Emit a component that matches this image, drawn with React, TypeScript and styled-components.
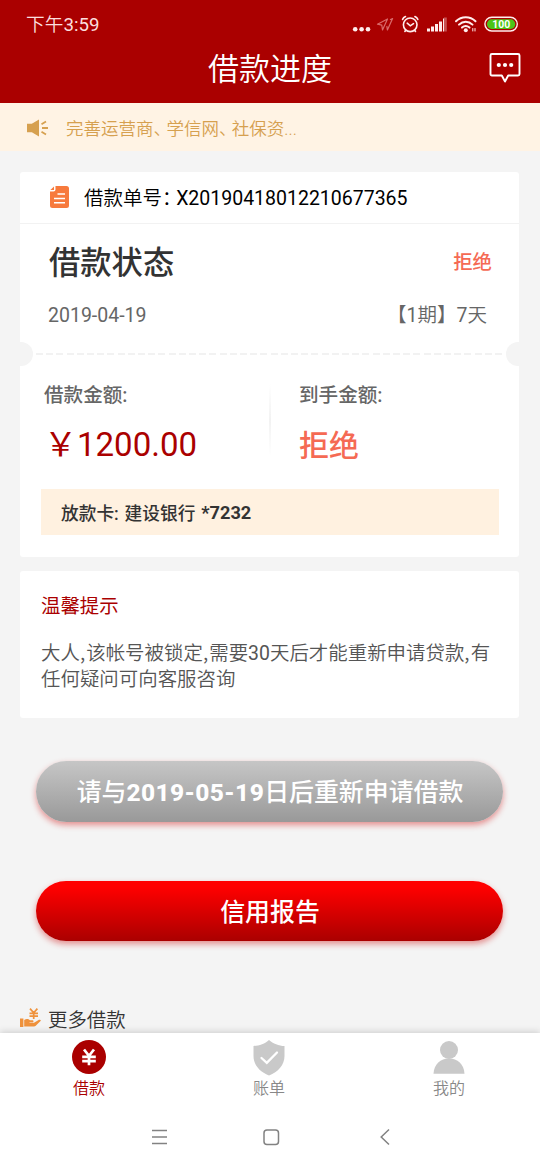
import React from "react";
import styled, { createGlobalStyle } from "styled-components";

const Global = createGlobalStyle`
  * { box-sizing: border-box; }
  body {
    margin: 0;
    background: #f4f4f4;
    font-family: Roboto, "Noto Sans CJK SC", sans-serif;
    color: #333;
    white-space: nowrap;
  }
`;

const Screen = styled.div`
  width: 540px;
  height: 1170px;
  display: flex;
  flex-direction: column;
  overflow: hidden;
  background: #f4f4f4;
`;

const Header = styled.header`
  height: 103px;
  flex: none;
  background: #aa0000;
  color: #fff;
`;

const StatusBar = styled.div`
  height: 48px;
  padding: 1px 21px 0 26px;
  display: flex;
  align-items: center;
  justify-content: space-between;
`;

const Clock = styled.span`
  font-size: 18.7px;
  line-height: 24px;
  font-weight: 400;
  color: #fbdede;
`;

const StatusIcons = styled.svg`
  width: 167px;
  height: 24px;
`;

const TitleBar = styled.div`
  height: 55px;
  display: grid;
  grid-template-columns: 60px 1fr 60px;
  align-items: center;
  justify-items: center;
`;

const Title = styled.h1`
  grid-column: 2;
  margin: -12px 0 0;
  font-size: 31px;
  line-height: 40px;
  font-weight: 350;
`;

const ChatIcon = styled.svg`
  width: 32px;
  height: 32px;
  margin: -15px 0 0 -10px;
`;

const Notice = styled.div`
  height: 48px;
  flex: none;
  padding-left: 26px;
  display: flex;
  align-items: center;
  gap: 17px;
  background: #fff3e4;
  color: #d6a04f;
  font-size: 17.5px;
  font-weight: 350;

  svg {
    margin-top: 1px;
  }
`;

const Spaced = styled.span<{ $by: number }>`
  letter-spacing: ${(p) => p.$by}px;
`;

const Comma = styled.span`
  font-family: "Noto Sans CJK SC", sans-serif;
  line-height: 1;
  letter-spacing: 1.1px;
`;

const Content = styled.main`
  flex: 1;
  min-height: 0;
  padding: 21px 21px 0 20px;
  overflow: hidden;
`;

const Card = styled.section`
  background: #fff;
  border-radius: 3px;
`;

const LoanCard = styled(Card)`
  height: 385px;
`;

const OrderRow = styled.div`
  height: 52px;
  padding: 0 0 2px 30px;
  display: flex;
  align-items: center;
  gap: 15px;
  border-bottom: 1px solid #f2f2f2;
  color: #000;
  font-size: 19.5px;
  font-weight: 400;
`;

const Cjk = styled.span`
  font-weight: 350;
`;

const StatusSection = styled.div`
  height: 118px;
  padding: 20px 27px 0 29px;
`;

const Between = styled.div`
  display: flex;
  align-items: center;
  justify-content: space-between;
`;

const StatusTitle = styled.h2`
  margin: 0;
  font-size: 31.3px;
  line-height: 40px;
  font-weight: 500;
`;

const Rejected = styled.span<{ $size: number }>`
  padding-bottom: 7px;
  font-size: ${(p) => p.$size}px;
  font-weight: 500;
  color: #f56a54;
`;

const MetaRow = styled(Between)`
  margin: 20px 5px 0 -1px;
  font-size: 19.5px;
  line-height: 24px;
  color: #666;
`;

const Tear = styled.div`
  height: 24px;
  display: flex;
  align-items: center;
  justify-content: space-between;
`;

const Notch = styled.i<{ $side: "left" | "right" }>`
  width: 13px;
  height: 24px;
  background: #f4f4f4;
  border-radius: ${(p) => (p.$side === "left" ? "0 12px 12px 0" : "12px 0 0 12px")};
`;

const Dashes = styled.i`
  flex: 1;
  height: 2px;
  margin: 0 4px 0 3px;
  background: repeating-linear-gradient(90deg, #f2f2f2 0 7px, transparent 7px 10.2px);
`;

const Amounts = styled.div`
  height: 123px;
  display: grid;
  grid-template-columns: 249px 2px 1fr;
`;

const AmountCell = styled.div<{ $left: number }>`
  padding: 18px 0 0 ${(p) => p.$left}px;
`;

const AmountLabel = styled.div`
  font-size: 19.6px;
  line-height: 24px;
  font-weight: 500;
  color: #666;
`;

const AmountValue = styled.div`
  height: 40px;
  margin-top: 17px;
  font-size: 33px;
  line-height: 40px;
  font-weight: 400;
  color: #aa0000;
`;

const Divider = styled.i`
  height: 72px;
  margin-top: 18px;
  background: linear-gradient(#fff, #f2f2f2 50%, #fff);
`;

const BankBar = styled.div`
  height: 46px;
  margin: 0 20px 0 21px;
  padding-left: 20px;
  display: flex;
  align-items: center;
  background: #fff1e0;
  font-size: 17.7px;
  font-weight: 500;
  white-space: pre;
  word-spacing: 1.5px;

  b {
    font-size: 18.2px;
  }
`;

const TipsCard = styled(Card)`
  height: 147px;
  margin-top: 14px;
  padding: 23px 21px 0;
`;

const TipsTitle = styled.h3`
  margin: 0;
  font-size: 19.4px;
  line-height: 26px;
  font-weight: 400;
  color: #aa0000;
`;

const TipsText = styled.p`
  margin: 21px 0 0;
  font-size: 19.45px;
  line-height: 26px;
  font-weight: 350;
  color: #555;
`;

const Days = styled.span`
  font-weight: 400;
`;

const Pill = styled.button<{ $muted?: boolean }>`
  display: flex;
  align-items: center;
  justify-content: center;
  width: 467px;
  height: ${(p) => (p.$muted ? 61 : 60)}px;
  margin: ${(p) => (p.$muted ? "43px" : "59px")} 0 0 16px;
  padding: 0 0 3px 1px;
  border: 0;
  border-radius: 31px;
  color: #fff;
  font: 500 24.9px Roboto, "Noto Sans CJK SC", sans-serif;
  background: ${(p) =>
    p.$muted ? "linear-gradient(#c6c6c6, #999)" : "linear-gradient(#ff0000 10%, #aa0000)"};
  box-shadow: 0 3px 6px rgba(205, 0, 0, 0.42);
`;

const PillDate = styled.b`
  font-weight: 800;
  font-size: 24.5px;
  letter-spacing: 0.4px;
`;

const More = styled.div`
  height: 30px;
  margin-top: 62px;
  display: flex;
  align-items: center;
  gap: 7px;
  font-size: 19.4px;
  font-weight: 350;
`;

const TabBar = styled.nav`
  height: 75px;
  flex: none;
  position: relative;
  display: grid;
  grid-template-columns: repeat(3, 1fr);
  background: #fff;
  box-shadow: 0 -1px 7px rgba(0, 0, 0, 0.17);
`;

const Tab = styled.div<{ $active?: boolean }>`
  padding: 7px 2px 0 0;
  display: flex;
  flex-direction: column;
  align-items: center;
  font-size: 16px;
  line-height: 22px;
  font-weight: 350;
  color: ${(p) => (p.$active ? "#aa0000" : "#888")};

  svg {
    width: 36px;
    height: 36px;
    margin-bottom: 2px;
  }
`;

const SystemNav = styled.div`
  height: 62px;
  flex: none;
  position: relative;
  padding: 0 146px 4px 151px;
  display: grid;
  grid-template-columns: 18px 18px 18px;
  column-gap: 94px;
  align-items: center;
  background: #fff;

  svg {
    width: 18px;
    height: 18px;
    fill: none;
    stroke: #828282;
    stroke-width: 1.5;
  }
`;

export default function App() {
  return (
    <Screen>
      <Global />
      <Header>
        <StatusBar>
          <Clock><Cjk>下午</Cjk>3:59</Clock>
          <StatusIcons viewBox="0 0 167 24" fill="none">
            <g fill="#ffeded">
              <circle cx="3.2" cy="16.2" r="2.3" />
              <circle cx="9.6" cy="16.2" r="2.3" />
              <circle cx="16" cy="16.2" r="2.3" />
            </g>
            <path d="M25.5 11.2 L35.5 6 L30.5 17 L29.8 12.2 Z M38 6.8 L40.6 5.6 L35.4 17 L34.8 13.2" stroke="#d96a6a" strokeWidth="1.2" strokeLinejoin="round" />
            <g stroke="#ffeded" strokeWidth="1.6" strokeLinecap="round">
              <circle cx="58.2" cy="11.8" r="6.8" />
              <path d="M55.2 10.2 L58.3 12.8 L61.5 10.6 M50.6 6.4 C51.2 5 52.2 4.2 53.5 3.6 M65.8 6.4 C65.2 5 64.2 4.2 62.9 3.6 M53.8 17.4 L52.9 18.4 M62.6 17.4 L63.5 18.4" />
            </g>
            <g fill="#ffeded">
              <rect x="75" y="15.5" width="3" height="3" />
              <rect x="79" y="13.5" width="3" height="5" />
              <rect x="83" y="11" width="3" height="7.5" />
              <rect x="87" y="8.5" width="3" height="10" />
              <rect x="91" y="5.5" width="1" height="13" />
              <rect x="92" y="4.5" width="2.8" height="14" opacity=".35" />
            </g>
            <g stroke="#ffeded" strokeWidth="2" strokeLinecap="round">
              <path d="M104 8.2 C109.5 2.8 118 2.8 123.5 8.2 M107 11.6 C111 7.7 116.5 7.7 120.5 11.6 M110 14.6 C112.2 12.6 115.2 12.6 117.5 14.6" />
              <path d="M120.8 15.5 V18 M123 15.5 V18" strokeWidth="1" />
            </g>
            <circle cx="113.8" cy="17.2" r="2" fill="#ffeded" />
            <rect x="132.9" y="4.2" width="32.4" height="13.8" rx="6.9" stroke="#ffeded" strokeWidth="1.4" />
            <rect x="135" y="6.3" width="28.2" height="9.6" rx="4.6" fill="#4cc417" />
            <text x="149.2" y="15.3" textAnchor="middle" fill="#fff" fontFamily="Roboto" fontWeight="700" fontSize="11.5" textLength="18" lengthAdjust="spacingAndGlyphs">100</text>
          </StatusIcons>
        </StatusBar>
        <TitleBar>
          <Title>借款进度</Title>
          <ChatIcon viewBox="0 0 32 32" fill="none">
            <path d="M3 2 H29 Q30.5 2 30.5 3.5 V22 Q30.5 23.5 29 23.5 H19.2 L16 29.5 L12.8 23.5 H3 Q1.5 23.5 1.5 22 V3.5 Q1.5 2 3 2 Z" stroke="#fff" strokeWidth="1.9" strokeLinejoin="round" />
            <g fill="#fff">
              <circle cx="9.8" cy="13" r="2.1" />
              <circle cx="16" cy="13" r="2.1" />
              <circle cx="22.2" cy="13" r="2.1" />
            </g>
          </ChatIcon>
        </TitleBar>
      </Header>

      <Notice>
        <svg width="23" height="18" viewBox="0 0 23 18" fill="#d6a04f">
          <path d="M1 4.8 H5.8 L13 0.6 V17.4 L5.8 13.2 H1 Z" />
          <path d="M15.5 5.2 L20 2.4 M16 9 H22 M15.5 12.8 L20 15.6" stroke="#d6a04f" strokeWidth="1.8" />
        </svg>
        <span>
          完善运营商<Spaced $by={-4.6}>、</Spaced>学信网<Spaced $by={-4.6}>、</Spaced>社保资...
        </span>
      </Notice>

      <Content>
        <LoanCard>
          <OrderRow>
            <svg width="19" height="22" viewBox="0 0 19 22">
              <path d="M5.5 0 H16.5 Q19 0 19 2.5 V19.5 Q19 22 16.5 22 H2.5 Q0 22 0 19.5 V5.5 H3.5 Q5.5 5.5 5.5 3.5 Z" fill="#f77a3d" />
              <path d="M4 0.4 V4 H0.4 Z" fill="#f77a3d" />
              <path d="M7.5 8 H15 M4 12.5 H15 M4 16.8 H15" stroke="#fff" strokeWidth="1.5" />
            </svg>
            <span>
              <Cjk>借款单号<Spaced $by={-5.4}>：</Spaced></Cjk>X20190418012210677365
            </span>
          </OrderRow>
          <StatusSection>
            <Between>
              <StatusTitle>借款状态</StatusTitle>
              <Rejected $size={19.4}>拒绝</Rejected>
            </Between>
            <MetaRow>
              <span>2019-04-19</span>
              <span>【1<Cjk>期</Cjk>】7<Cjk>天</Cjk></span>
            </MetaRow>
          </StatusSection>
          <Tear>
            <Notch $side="left" />
            <Dashes />
            <Notch $side="right" />
          </Tear>
          <Amounts>
            <AmountCell $left={24}>
              <AmountLabel>借款金额:</AmountLabel>
              <AmountValue>￥1200.00</AmountValue>
            </AmountCell>
            <Divider />
            <AmountCell $left={28}>
              <AmountLabel>到手金额:</AmountLabel>
              <AmountValue><Rejected $size={30}>拒绝</Rejected></AmountValue>
            </AmountCell>
          </Amounts>
          <BankBar>放款卡: 建设银行 <b>*7232</b></BankBar>
        </LoanCard>

        <TipsCard>
          <TipsTitle>温馨提示</TipsTitle>
          <TipsText>
            大人<Comma>,</Comma>该帐号被锁定<Comma>,</Comma>需要<Days>30</Days>天后才能重新申请贷款<Comma>,</Comma>有
            <br />
            任何疑问可向客服咨询
          </TipsText>
        </TipsCard>

        <Pill $muted>
          <span>请与<PillDate>2019-05-19</PillDate>日后重新申请借款</span>
        </Pill>
        <Pill>信用报告</Pill>

        <More>
          <svg width="21" height="20" viewBox="0 0 21 20" fill="#ef923c">
            <path d="M0 10.5 H3.4 V19 H0 Z M4.2 12 C6.5 10.4 8.5 11 10 12.3 H13 Q14.2 13.2 13 14.2 H9.5 V14.8 H14 L19 11.8 Q21 11.4 20.8 12.8 L15.5 18 Q15 18.4 14 18.4 H4.2 Z" />
            <path d="M10 0.6 L13.7 4.8 L17.4 0.6 M13.7 4.8 V11 M9.5 5.4 H18 M9.5 8.2 H18" stroke="#ef923c" strokeWidth="1.7" fill="none" />
          </svg>
          更多借款
        </More>
      </Content>

      <TabBar>
        <Tab $active>
          <svg viewBox="0 0 36 36">
            <circle cx="18" cy="17" r="17" fill="#aa0000" />
            <path d="M13 9.5 L18 15.8 L23 9.5 M18 15.8 V25.3 M11.2 16.9 H24.8 M11.2 21.2 H24.8" stroke="#fff" strokeWidth="2.7" fill="none" />
          </svg>
          借款
        </Tab>
        <Tab>
          <svg viewBox="0 0 36 36">
            <path d="M18 0 C22 3.6 28 6 33.5 6 V16 C33.5 25 27 32 18 35.5 C9 32 2.5 25 2.5 16 V6 C8 6 14 3.6 18 0 Z" fill="#c9c9c9" />
            <path d="M10.5 18 L15.8 22.8 L26 12.5" stroke="#fff" strokeWidth="2.3" fill="none" strokeLinecap="round" />
          </svg>
          账单
        </Tab>
        <Tab>
          <svg viewBox="0 0 36 36" fill="#c9c9c9">
            <circle cx="18" cy="10" r="9" />
            <path d="M2.5 33.8 C3 24 9.5 18.5 18 18.5 C26.5 18.5 33 24 33.5 33.8 Z" />
          </svg>
          我的
        </Tab>
      </TabBar>
      <SystemNav>
        <svg viewBox="0 0 18 18"><path d="M1 2.5 H16 M1 9 H16 M1 15.5 H16" /></svg>
        <svg viewBox="0 0 18 18"><rect x="1" y="2" width="14.5" height="14.5" rx="3" /></svg>
        <svg viewBox="0 0 18 18"><path d="M14 1.5 L6.2 9 L14 16.5" /></svg>
      </SystemNav>
    </Screen>
  );
}
